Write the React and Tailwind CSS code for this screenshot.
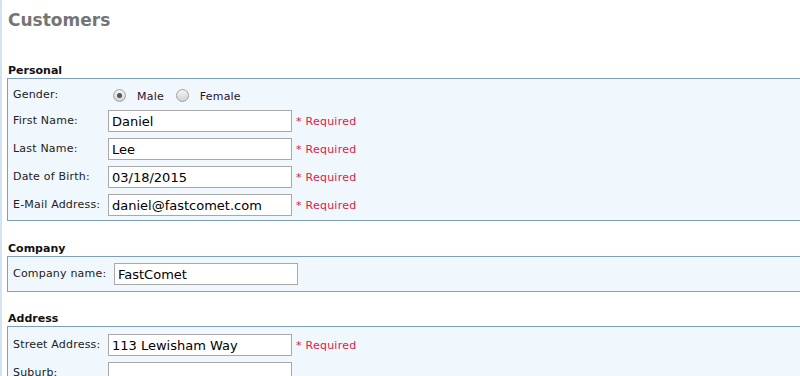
import React from "react";

const font = { fontFamily: '"DejaVu Sans", Verdana, sans-serif' };

function Radio({ checked }) {
  return (
    <span className="w-[13px] h-[13px] rounded-full border border-[#a0a0a0] bg-gradient-to-b from-[#f4f4f4] to-[#d2d2d2] flex items-center justify-center shrink-0">
      {checked && <span className="w-[5px] h-[5px] rounded-full bg-[#555]" />}
    </span>
  );
}

function Field({ label, value, required, labelWidth = "w-[95px]", className = "" }) {
  return (
    <div className={"flex items-center " + className}>
      <label className={labelWidth + " shrink-0 text-[11px] tracking-[0.2px] text-[#222]"}>
        {label}
      </label>
      <input
        type="text"
        defaultValue={value}
        className="w-[184px] h-[22px] border border-[#a9a9a9] bg-white pl-[3px] text-[13px] text-black outline-none"
        style={font}
      />
      {required && (
        <span className="ml-[4px] mt-[2px] text-[11px] tracking-[0.25px] text-[#e5173f]">* Required</span>
      )}
    </div>
  );
}

function Section({ title, children, className = "" }) {
  return (
    <div className={className}>
      <h3 className="pl-[1px] text-[11px] leading-[14px] font-bold text-[#111]">{title}</h3>
      <div className="mr-[-40px] border border-[#7b9ec3] bg-[#f0f7fd] pl-[5px]">{children}</div>
    </div>
  );
}

export default function App() {
  return (
    <div className="w-full min-h-screen overflow-hidden bg-white" style={font}>
      <div className="border-l-2 border-[#d3e3f2] pl-[5px] min-h-screen">
        <h1 className="pt-[10px] pl-[1px] text-[17px] leading-[20px] font-bold text-[#757575]">
          Customers
        </h1>

        <Section title="Personal" className="mt-[34px]">
          <div className="pt-[5px] pb-[4px]">
            <div className="flex items-center h-[22px]">
              <span className="w-[95px] text-[11px] tracking-[0.2px] text-[#222]">Gender:</span>
              <span className="ml-[5px]">
                <Radio checked />
              </span>
              <span className="ml-[11px] mt-[5px] text-[11px] tracking-[0.2px] text-[#2a1030]">Male</span>
              <span className="ml-[12px]">
                <Radio />
              </span>
              <span className="ml-[11px] mt-[5px] text-[11px] tracking-[0.2px] text-[#2a1030]">Female</span>
            </div>
            <Field label="First Name:" value="Daniel" required className="mt-[4px]" />
            <Field label="Last Name:" value="Lee" required className="mt-[6px]" />
            <Field label="Date of Birth:" value="03/18/2015" required className="mt-[6px]" />
            <Field label="E-Mail Address:" value="daniel@fastcomet.com" required className="mt-[6px]" />
          </div>
        </Section>

        <Section title="Company" className="mt-[21px]">
          <div className="py-[6px]">
            <Field label="Company name:" value="FastComet" labelWidth="w-[101px]" />
          </div>
        </Section>

        <Section title="Address" className="mt-[20px]">
          <div className="pt-[7px] pb-[5px]">
            <Field label="Street Address:" value="113 Lewisham Way" required />
            <Field label="Suburb:" value="" className="mt-[6px]" />
          </div>
        </Section>
      </div>
    </div>
  );
}
